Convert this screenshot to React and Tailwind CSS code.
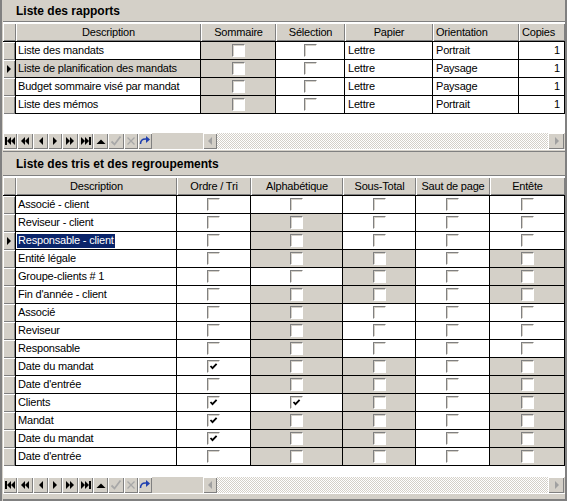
import React from 'react';

const bevel = "shadow-[inset_1px_1px_0_#ffffff,inset_-1px_-1px_0_#808080]";

function Checkbox({ checked }) {
  return (
    <div className="w-[13px] h-[13px] bg-white border border-t-[#808080] border-l-[#808080] border-b-white border-r-white shadow-[inset_1px_1px_0_#d4d0c8] flex items-center justify-center">
      {checked && (
        <svg width="9" height="9" viewBox="0 0 9 9">
          <path d="M1.5 4 L3.5 6.2 L7.6 1.8" stroke="#000" strokeWidth="1.8" fill="none" />
        </svg>
      )}
    </div>
  );
}

function Arrow() {
  return (
    <svg width="6" height="10" viewBox="0 0 6 10">
      <polygon points="1,1 5,5 1,9" fill="#000" />
    </svg>
  );
}

function NavIcon({ i }) {
  const k = "#000";
  const g = "#a8a8a8";
  switch (i) {
    case 0:
      return (<svg width="12" height="12" viewBox="0 0 12 12"><rect x="1" y="2" width="2" height="8" fill={k} /><polygon points="7,2 3,6 7,10" fill={k} /><polygon points="11,2 7,6 11,10" fill={k} /></svg>);
    case 1:
      return (<svg width="12" height="12" viewBox="0 0 12 12"><polygon points="6,2 2,6 6,10" fill={k} /><polygon points="10,2 6,6 10,10" fill={k} /></svg>);
    case 2:
      return (<svg width="12" height="12" viewBox="0 0 12 12"><polygon points="8,2 4,6 8,10" fill={k} /></svg>);
    case 3:
      return (<svg width="12" height="12" viewBox="0 0 12 12"><polygon points="4,2 8,6 4,10" fill={k} /></svg>);
    case 4:
      return (<svg width="12" height="12" viewBox="0 0 12 12"><polygon points="2,2 6,6 2,10" fill={k} /><polygon points="6,2 10,6 6,10" fill={k} /></svg>);
    case 5:
      return (<svg width="12" height="12" viewBox="0 0 12 12"><polygon points="1,2 5,6 1,10" fill={k} /><polygon points="5,2 9,6 5,10" fill={k} /><rect x="9" y="2" width="2" height="8" fill={k} /></svg>);
    case 6:
      return (<svg width="12" height="12" viewBox="0 0 12 12"><polygon points="1.5,9 6,4.5 10.5,9" fill={k} /></svg>);
    case 7:
      return (<svg width="12" height="12" viewBox="0 0 12 12"><path d="M1.5 6.5 L4.5 9.5 L10.5 1.5" stroke={g} strokeWidth="1.8" fill="none" /></svg>);
    case 8:
      return (<svg width="12" height="12" viewBox="0 0 12 12"><path d="M2.5 2.5 L9.5 9.5 M9.5 2.5 L2.5 9.5" stroke={g} strokeWidth="1.3" fill="none" /></svg>);
    default:
      return (<svg width="12" height="12" viewBox="0 0 12 12"><path d="M1.5 9 C1.5 5 3.5 4 6.5 4 L8 4" stroke="#2040b0" strokeWidth="1.5" fill="none" /><polygon points="7,1 11,4.5 7,8" fill="#2040b0" /></svg>);
  }
}

const navWidths = ["w-[14px]", "w-[16px]", "w-[15px]", "w-[14px]", "w-[16px]", "w-[15px]", "w-[15px]", "w-[16px]", "w-[14px]", "w-[14px]"];

function NavBar() {
  return (
    <div className="h-[16px] flex bg-[#d4d0c8] shrink-0">
      <div className="flex">
        {navWidths.map((w, i) => (
          <div key={i} className={`${w} h-[16px] flex items-center justify-center ${bevel}`}>
            <NavIcon i={i} />
          </div>
        ))}
      </div>
      <div className="w-[51px]" />
      <div className={`w-[14px] h-[16px] flex items-center justify-center ${bevel}`}>
        <svg width="5" height="8" viewBox="0 0 5 8"><polygon points="4,0 0,4 4,8" fill="#a0a0a0" /></svg>
      </div>
      <div className="flex-1 bg-[image:repeating-conic-gradient(#ffffff_0%_25%,#d4d0c8_0%_50%)] bg-[length:2px_2px]" />
      <div className={`w-[16px] h-[16px] flex items-center justify-center ${bevel}`}>
        <svg width="5" height="8" viewBox="0 0 5 8"><polygon points="1,0 5,4 1,8" fill="#a0a0a0" /></svg>
      </div>
      <div className="w-px" />
    </div>
  );
}

function TitleBar({ text, h }) {
  return (
    <>
      <div className={`${h} flex items-center pl-[13px] font-bold text-[12px] tracking-normal shrink-0`}>{text}</div>
      <div className="h-px bg-[#808080] shrink-0" />
      <div className="h-px bg-white shrink-0" />
    </>
  );
}

function HeaderRow({ cols }) {
  return (
    <div className="h-[19px] flex border-b border-black shrink-0">
      <div className={`w-[13px] h-[18px] ${bevel}`} />
      {cols.map((c, i) => (
        <div key={i} className={`${c.w} h-[18px] flex items-center ${c.left ? 'justify-start pl-[3px]' : 'justify-center'} ${bevel}`}>
          {c.label}
        </div>
      ))}
    </div>
  );
}

function Indicator({ active }) {
  return (
    <div className={`w-[13px] h-[18px] bg-[#d4d0c8] border-r border-black flex items-center pl-[3px] ${bevel}`}>
      {active && <Arrow />}
    </div>
  );
}

const topCols = [
  { label: 'Description', w: 'w-[185px]' },
  { label: 'Sommaire', w: 'w-[75px]' },
  { label: 'Sélection', w: 'w-[69px]' },
  { label: 'Papier', w: 'w-[88px]' },
  { label: 'Orientation', w: 'w-[86px]', left: true },
  { label: 'Copies', w: 'w-[46px]', left: true },
];

const topRows = [
  ['Liste des mandats', 'Lettre', 'Portrait'],
  ['Liste de planification des mandats', 'Lettre', 'Paysage'],
  ['Budget sommaire visé par mandat', 'Lettre', 'Paysage'],
  ['Liste des mémos', 'Lettre', 'Portrait'],
];

const botCols = [
  { label: 'Description', w: 'w-[161px]' },
  { label: 'Ordre / Tri', w: 'w-[74px]' },
  { label: 'Alphabétique', w: 'w-[92px]' },
  { label: 'Sous-Total', w: 'w-[73px]' },
  { label: 'Saut de page', w: 'w-[74px]' },
  { label: 'Entête', w: 'w-[75px]' },
];

const botW = ['w-[74px]', 'w-[92px]', 'w-[73px]', 'w-[74px]', 'w-[75px]'];

// [label, grayMask (alpha, sous, ent), checks (ordre, alpha)]
const botRows = [
  ['Associé - client', [0, 0, 0], [0, 0]],
  ['Reviseur - client', [1, 0, 0], [0, 0]],
  ['Responsable - client', [1, 0, 0], [0, 0]],
  ['Entité légale', [1, 1, 1], [0, 0]],
  ['Groupe-clients # 1', [0, 1, 1], [0, 0]],
  ["Fin d'année - client", [1, 1, 1], [0, 0]],
  ['Associé', [1, 0, 0], [0, 0]],
  ['Reviseur', [1, 0, 0], [0, 0]],
  ['Responsable', [1, 0, 0], [0, 0]],
  ['Date du mandat', [1, 1, 1], [1, 0]],
  ["Date d'entrée", [1, 1, 1], [0, 0]],
  ['Clients', [0, 1, 1], [1, 1]],
  ['Mandat', [1, 1, 1], [1, 0]],
  ['Date du mandat', [1, 1, 1], [1, 0]],
  ["Date d'entrée", [1, 1, 1], [0, 0]],
];

function Cell({ w, gray, children, className = '' }) {
  return (
    <div className={`${w} h-[18px] border-r border-b border-black flex items-center ${gray ? 'bg-[#d4d0c8]' : 'bg-white'} ${className}`}>
      {children}
    </div>
  );
}

export default function App() {
  return (
    <div className="w-[567px] h-[501px] bg-[#d4d0c8] border-l-2 border-r-2 border-[#808080] pl-px overflow-hidden flex flex-col font-['Liberation_Sans',Arial,sans-serif] text-[11px] tracking-[-0.2px] text-black leading-none">
      {/* Top panel */}
      <TitleBar text="Liste des rapports" h="h-[21px]" />
      <HeaderRow cols={topCols} />
      {topRows.map((r, i) => (
        <div key={i} className="flex shrink-0">
          <Indicator active={i === 1} />
          <Cell w="w-[185px]" gray={i === 1} className="pl-[2px]">{r[0]}</Cell>
          <Cell w="w-[75px]" gray className="justify-center"><Checkbox /></Cell>
          <Cell w="w-[69px]" className="justify-center"><Checkbox /></Cell>
          <Cell w="w-[88px]" className="pl-[3px]">{r[1]}</Cell>
          <Cell w="w-[86px]" className="pl-[3px]">{r[2]}</Cell>
          <Cell w="w-[46px]" className="justify-end pr-[4px]">1</Cell>
        </div>
      ))}
      <div className="h-[19px] bg-white shrink-0" />
      <NavBar />

      {/* separator */}
      <div className="h-px bg-white shrink-0" />
      <div className="h-px bg-[#d4d0c8] shrink-0" />
      <div className="h-px bg-[#808080] shrink-0" />

      {/* Bottom panel */}
      <TitleBar text="Liste des tris et des regroupements" h="h-[23px]" />
      <HeaderRow cols={botCols} />
      {botRows.map((r, i) => {
        const [label, gm, ck] = r;
        const grays = [0, gm[0], gm[1], 0, gm[2]];
        const checks = [ck[0], ck[1], 0, 0, 0];
        return (
          <div key={i} className="flex shrink-0">
            <Indicator active={i === 2} />
            <Cell w="w-[161px]" className="pl-[1px]">
              {i === 2 ? (
                <span className="bg-[#0a246a] text-white px-px h-[14px] flex items-center">{label}</span>
              ) : (
                <span className="px-px">{label}</span>
              )}
            </Cell>
            {botW.map((w, j) => (
              <Cell key={j} w={w} gray={!!grays[j]} className="justify-center">
                <Checkbox checked={!!checks[j]} />
              </Cell>
            ))}
          </div>
        );
      })}
      <div className="h-[11px] bg-white shrink-0" />
      <NavBar />
      <div className="h-px bg-white shrink-0" />
      <div className="h-[5px] bg-[#d4d0c8] shrink-0" />
      <div className="h-[2px] bg-[#808080] shrink-0" />
    </div>
  );
}
